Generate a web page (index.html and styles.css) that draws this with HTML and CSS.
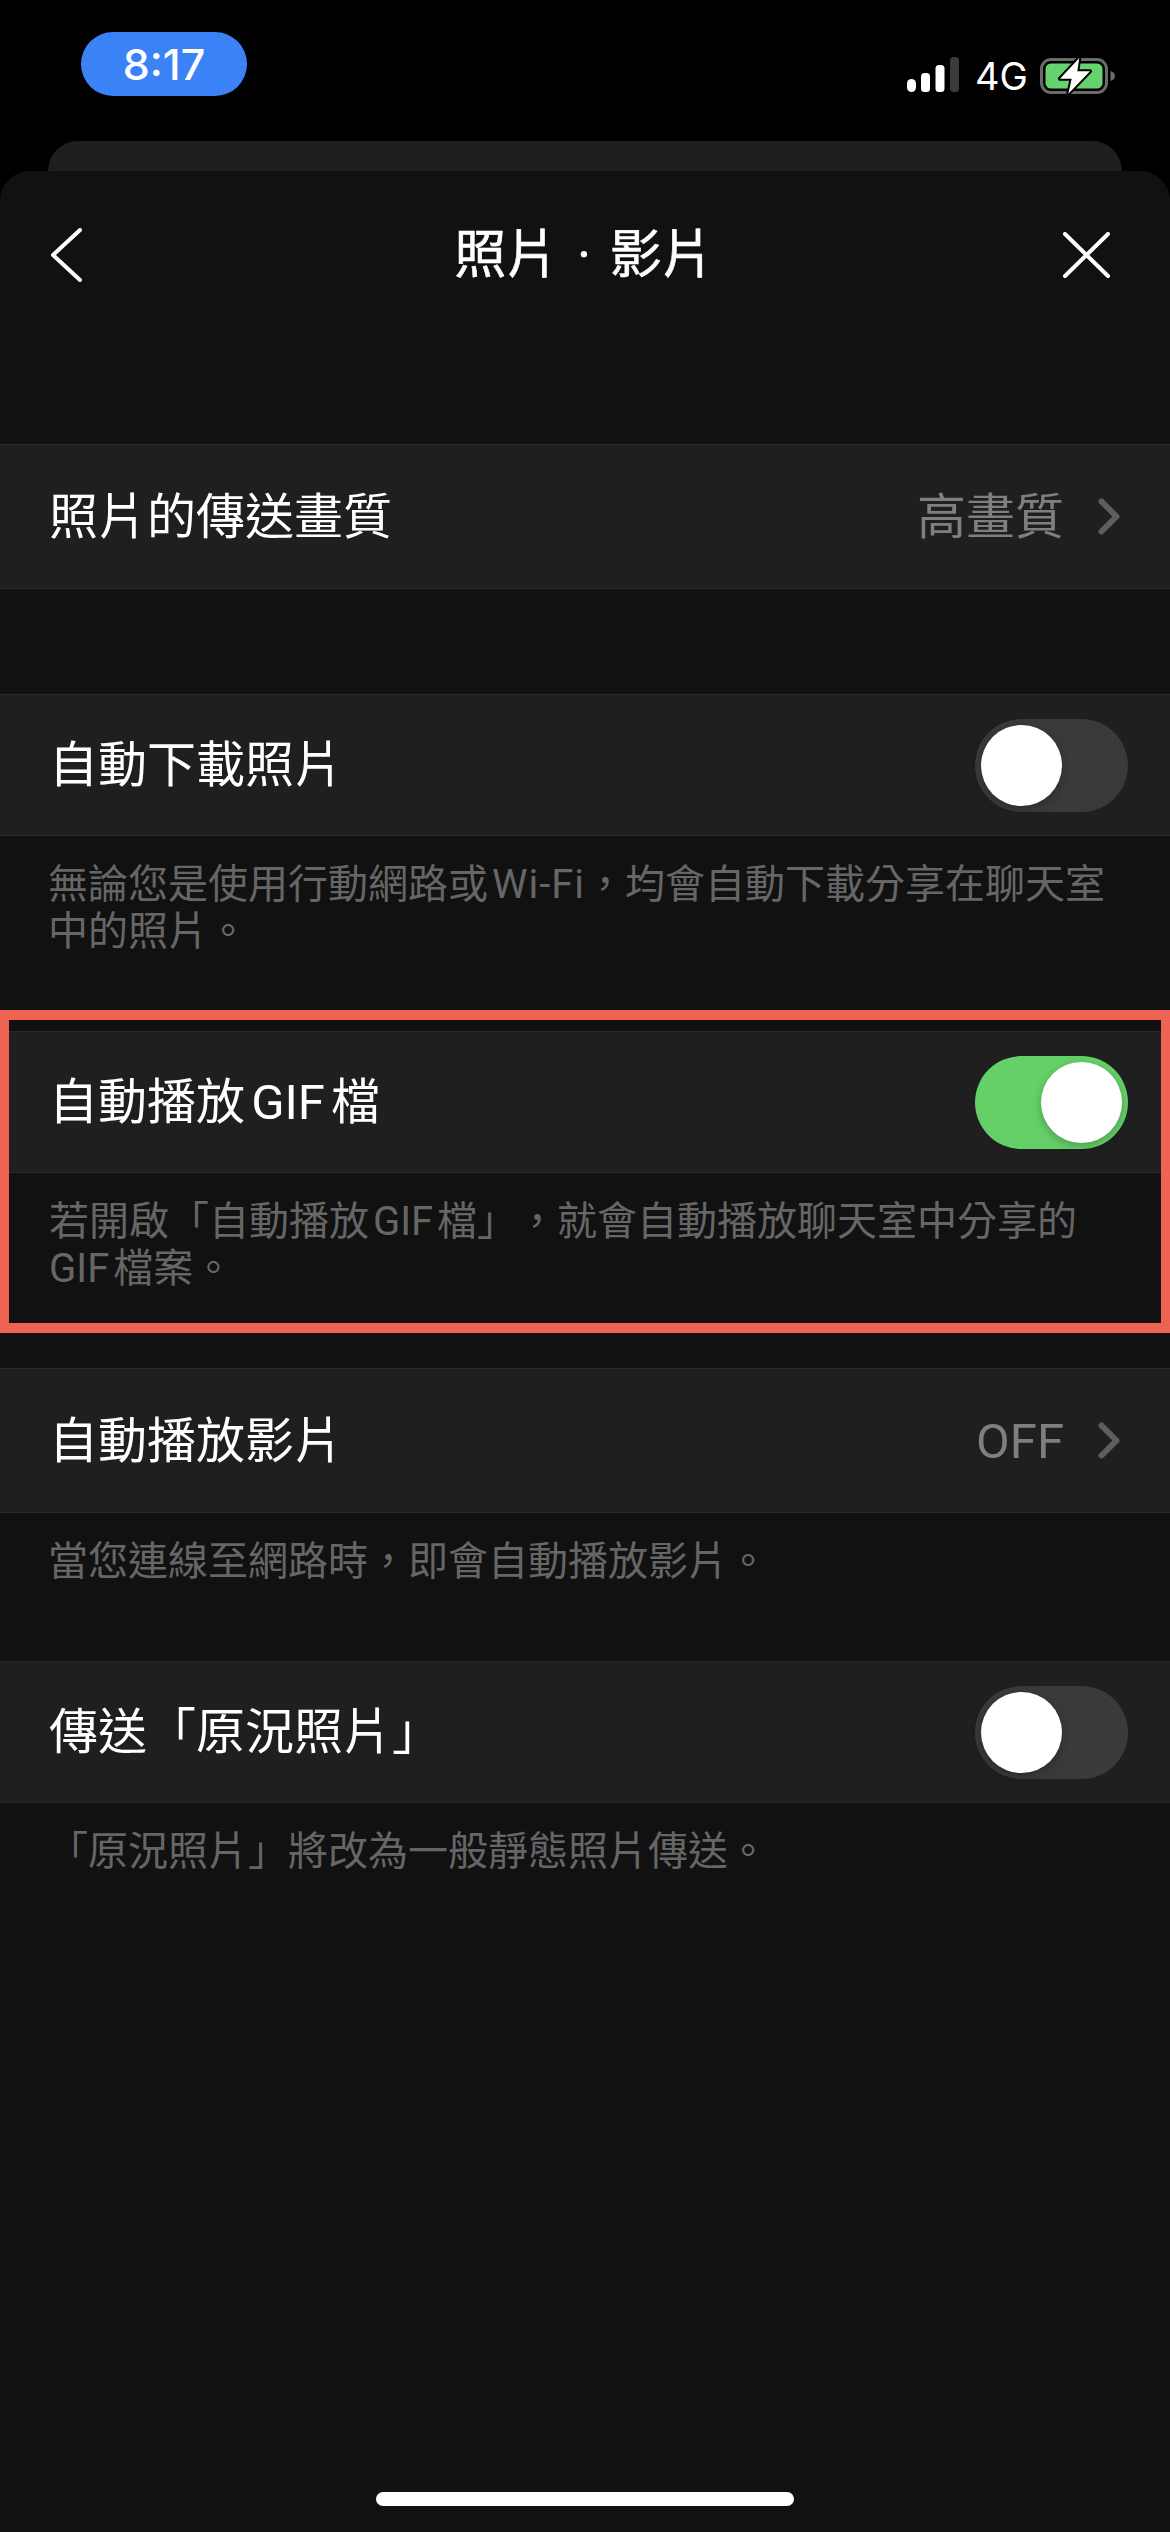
FILE: index.html
```html
<!DOCTYPE html>
<html lang="zh-Hant">
<head>
<meta charset="utf-8">
<title>照片・影片</title>
<link rel="stylesheet" href="styles.css">
</head>
<body>
<div class="status">
  <div class="pill">8:17</div>
  <div class="status-right">
    <svg class="signal" width="52" height="35" viewBox="0 0 52 35"><rect x="0" y="22" width="9" height="13" rx="4.5" fill="#fff"/><rect x="14" y="16" width="9" height="19" rx="3.5" fill="#fff"/><rect x="28.500" y="8" width="9" height="27" rx="3.5" fill="#fff"/><rect x="43" y="0" width="9" height="35" rx="3.5" fill="#3a3a3a"/></svg>
    <span class="net">4G</span>
    <svg class="battery" width="76" height="38" viewBox="0 0 76 38"><rect x="1.500" y="2.500" width="65" height="33" rx="9.500" fill="none" stroke="#6b6b6b" stroke-width="3"/><rect x="5.500" y="6.500" width="57" height="25" rx="5.500" fill="#66d36e"/><path d="M70.500 14 C74 15 75 17 75 19 C75 21 74 23 70.500 24 Z" fill="#6b6b6b"/><path d="M39.300 1 L20 21.700 L31.700 21.700 L28.300 36.700 L50 14.300 L37.300 14.300 Z" fill="#fff" stroke="#000" stroke-width="4" stroke-linejoin="round" paint-order="stroke"/></svg>
  </div>
</div>
<div class="peek"></div>
<main class="sheet">
  <header class="nav">
    <svg class="back" width="32" height="54" viewBox="0 0 32 54"><path d="M30 2 L3 27 L30 52" fill="none" stroke="#fff" stroke-width="4" stroke-linecap="round" stroke-linejoin="round"/></svg>
    <h1 class="title">照片 · 影片</h1>
    <svg class="close" width="48" height="46" viewBox="0 0 48 46"><path d="M3 2 L46 44 M46 2 L3 44" fill="none" stroke="#fff" stroke-width="4" stroke-linecap="round"/></svg>
  </header>

  <section class="row row-tall first">
    <span class="label">照片的傳送畫質</span>
    <span class="value">高畫質</span>
    <svg class="chev" width="22" height="37" viewBox="0 0 22 37"><path d="M3.500 3.500 L18.500 18.500 L3.500 33.500" fill="none" stroke="#5e5e5e" stroke-width="6" stroke-linecap="round" stroke-linejoin="round"/></svg>
  </section>

  <section class="row second">
    <span class="label">自動下載照片</span>
    <span class="toggle"><span class="knob"></span></span>
  </section>
  <p class="note note-a">無論您是使用行動網路或 <span class="wifi">Wi-Fi</span>，均會自動下載分享在聊天室中的照片。</p>

  <div class="frame">
    <section class="row">
      <span class="label">自動播放 GIF 檔</span>
      <span class="toggle on"><span class="knob"></span></span>
    </section>
    <p class="note">若開啟「自動播放 GIF 檔」，就會自動播放聊天室中分享的 GIF 檔案。</p>
  </div>

  <section class="row row-tall after-frame">
    <span class="label">自動播放影片</span>
    <span class="value">OFF</span>
    <svg class="chev" width="22" height="37" viewBox="0 0 22 37"><path d="M3.500 3.500 L18.500 18.500 L3.500 33.500" fill="none" stroke="#5e5e5e" stroke-width="6" stroke-linecap="round" stroke-linejoin="round"/></svg>
  </section>
  <p class="note note-b">當您連線至網路時，即會自動播放影片。</p>

  <section class="row">
    <span class="label">傳送「原況照片」</span>
    <span class="toggle"><span class="knob"></span></span>
  </section>
  <p class="note">「原況照片」將改為一般靜態照片傳送。</p>

  <div class="home"></div>
</main>
</body>
</html>
```
FILE: styles.css
```css
* { box-sizing: border-box; }
html, body { margin: 0; padding: 0; }
body {
  width: 1170px;
  height: 2532px;
  background: #000;
  overflow: hidden;
  font-family: Roboto, "Noto Sans CJK TC", sans-serif;
  color: #fff;
  text-spacing-trim: space-all;
}
.status {
  height: 141px;
  display: flex;
  justify-content: space-between;
  align-items: flex-start;
  padding: 0 54px 0 81px;
}
.pill {
  margin-top: 32px;
  width: 166px;
  height: 64px;
  border-radius: 32px;
  background: #3c82f7;
  font: 500 43px/64px Inter, sans-serif;
  text-align: center;
}
.status-right {
  margin-top: 57px;
  display: flex;
  align-items: flex-start;
}
.net {
  font: 400 38px/35px Inter, sans-serif;
  margin-left: 16px;
  width: 65px;
  margin-top: 2px;
}
.peek {
  height: 30px;
  margin: 0 48px;
  background: #1f1f21;
  border-radius: 30px 30px 0 0;
}
.sheet {
  height: 2361px;
  background: #111;
  border-radius: 30px 30px 0 0;
  display: flex;
  flex-direction: column;
}
.nav {
  height: 168px;
  display: grid;
  grid-template-columns: 1fr auto 1fr;
  align-items: center;
  padding: 0 60px 0 50px;
}
.close { justify-self: end; }
.title {
  margin: 0;
  padding: 2px 0 0 8px;
  font-size: 52px;
  font-weight: 400;
  line-height: 60px;
  word-spacing: 6px;
  -webkit-text-stroke: 0.6px #fff;
}
.row {
  flex: none;
  height: 142px;
  display: flex;
  align-items: center;
  padding: 2px 42px 0 49px;
  background: #1f1f1f;
  border-top: 1px solid #2a2a2a;
  border-bottom: 1px solid #2a2a2a;
}
.row-tall { height: 145px; padding-right: 50px; }
.first { margin-top: 105px; }
.second { margin-top: 105px; }
.label { font-size: 49px; line-height: 60px; white-space: nowrap; word-spacing: -6px; }
.value {
  margin-left: auto;
  margin-right: 34px;
  font-size: 49px;
  line-height: 60px;
  color: #7f7f7f;
}
.chev { margin-top: -2px; }
.toggle {
  margin-left: auto;
  margin-top: -2px;
  width: 153px;
  height: 93px;
  border-radius: 47px;
  background: #3a3a3c;
  padding: 6px;
  display: flex;
}
.knob {
  width: 81px;
  height: 81px;
  border-radius: 50%;
  background: #fff;
  box-shadow: 0 3px 10px rgba(0, 0, 0, 0.25);
}
.toggle.on { background: #66d068; justify-content: flex-end; }
.note {
  margin: 0;
  padding: 25px 48px 0 48px;
  font-size: 40px;
  line-height: 47px;
  color: #666;
  word-spacing: -6px;
}
.wifi { letter-spacing: 1px; }
.note-a { height: 174px; }
.note-b { height: 148px; }
.frame {
  flex: none;
  height: 323px;
  border: solid #ee6352;
  border-width: 10px 9px;
  padding-top: 11px;
}
.frame .row { padding: 2px 33px 0 40px; }
.frame .note { padding: 25px 30px 0 40px; }
.after-frame { margin-top: 35px; }
.home {
  margin: auto auto 26px;
  width: 418px;
  height: 14px;
  border-radius: 7px;
  background: #fff;
}
```
